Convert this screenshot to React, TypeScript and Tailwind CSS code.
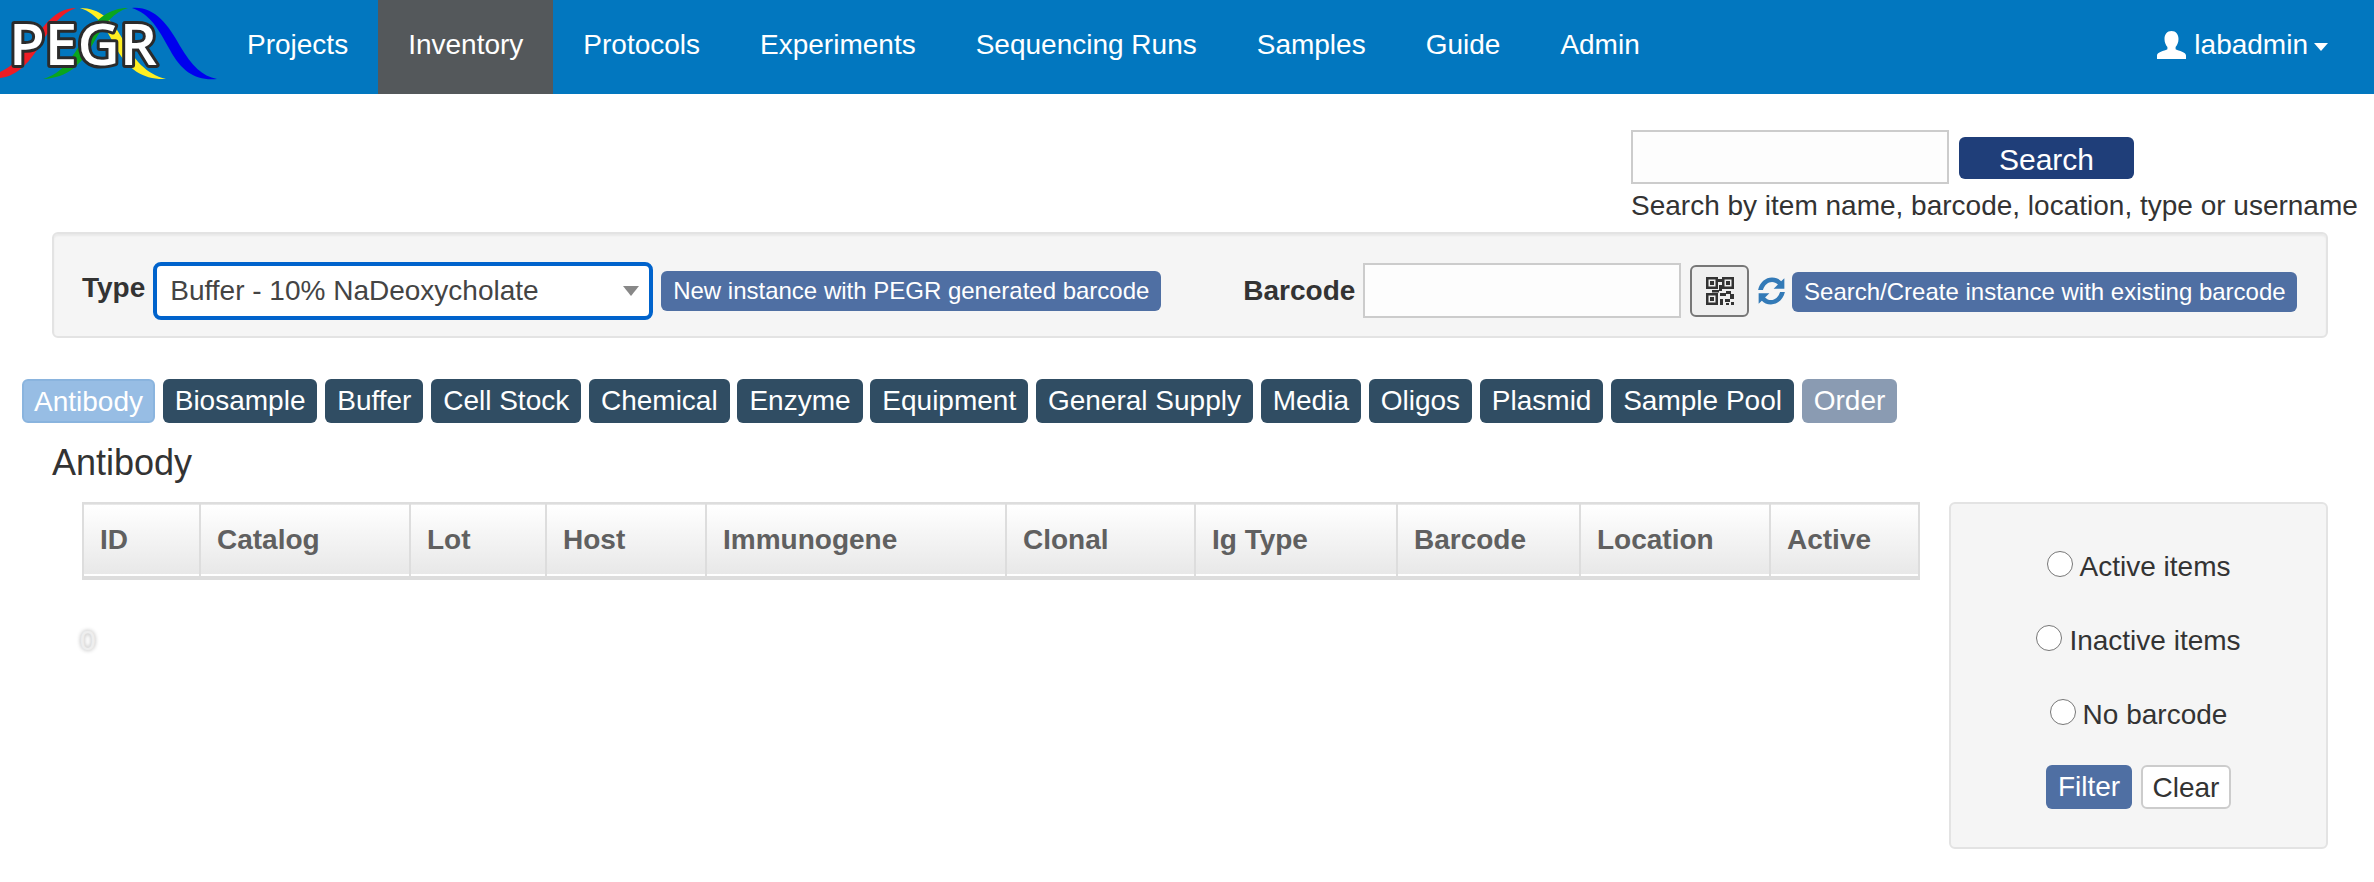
const NAV_ITEMS = ["Projects", "Inventory", "Protocols", "Experiments", "Sequencing Runs", "Samples", "Guide", "Admin"];
const TABS = ["Biosample", "Buffer", "Cell Stock", "Chemical", "Enzyme", "Equipment", "General Supply", "Media", "Oligos", "Plasmid", "Sample Pool"];
const COLUMNS = [
  { name: "ID", width: "w-[117px]" },
  { name: "Catalog", width: "w-[210px]" },
  { name: "Lot", width: "w-[136px]" },
  { name: "Host", width: "w-[160px]" },
  { name: "Immunogene", width: "w-[300px]" },
  { name: "Clonal", width: "w-[189px]" },
  { name: "Ig Type", width: "w-[202px]" },
  { name: "Barcode", width: "w-[183px]" },
  { name: "Location", width: "w-[190px]" },
  { name: "Active", width: "w-[149px]" },
];
const FILTERS = ["Active items", "Inactive items", "No barcode"];

function Logo() {
  return (
    <svg width="217" height="94" viewBox="0 0 217 94" className="shrink-0">
      <path d="M0 72 C22 62 32 40 44 26 C54 14 64 8 76 8 C60 14 52 26 42 42 C30 62 18 76 0 78 Z" fill="#ee1c25" />
      <path d="M80 8 C100 8 112 20 122 38 C134 60 146 74 166 79 C144 80 128 70 116 48 C106 28 98 14 80 8 Z" fill="#ffee22" />
      <path d="M43 79 C62 74 72 58 84 38 C96 18 110 8 128 8 C114 12 104 24 94 42 C82 64 68 78 43 79 Z" fill="#0aa51e" />
      <path d="M132 8 C154 6 168 24 180 46 C192 66 202 76 217 79 C196 81 182 72 170 50 C158 28 150 14 132 8 Z" fill="#0000ee" />
      <text
        x="9"
        y="65"
        fontFamily="'Open Sans', sans-serif"
        fontSize="58"
        fontWeight="600"
        textLength="148"
        lengthAdjust="spacingAndGlyphs"
        fill="#ffffff"
        stroke="#2b2b2b"
        strokeWidth="6"
        strokeLinejoin="round"
        paintOrder="stroke"
      >
        PEGR
      </text>
    </svg>
  );
}

function UserIcon() {
  return (
    <svg width="29" height="28" viewBox="0 0 29 28" fill="#ffffff">
      <path d="M14.5 0 C19 0 21.5 3.5 21.5 8 C21.5 11.5 20.2 14 18.6 16 L18.6 18.2 C22 20 29 21 29 24.5 L29 28 L0 28 L0 24.5 C0 21 7 20 10.4 18.2 L10.4 16 C8.8 14 7.5 11.5 7.5 8 C7.5 3.5 10 0 14.5 0 Z" />
    </svg>
  );
}

function QrIcon() {
  return (
    <svg width="28" height="28" viewBox="0 0 28 28" fill="#333333">
      <path fillRule="evenodd" d="M0 0H12V12H0Z M2.5 2.5V9.5H9.5V2.5Z" />
      <rect x="4" y="4" width="4" height="4" />
      <path fillRule="evenodd" d="M16 0H28V12H16Z M18.5 2.5V9.5H25.5V2.5Z" />
      <rect x="20" y="4" width="4" height="4" />
      <path fillRule="evenodd" d="M0 16H12V28H0Z M2.5 18.5V25.5H9.5V18.5Z" />
      <rect x="4" y="20" width="4" height="4" />
      <rect x="12" y="2" width="4" height="3" />
      <rect x="13" y="8" width="3" height="6" />
      <rect x="6" y="13" width="7" height="2.5" />
      <rect x="14" y="16" width="6" height="3" />
      <rect x="20" y="14" width="5" height="3" />
      <rect x="24" y="17" width="4" height="5" />
      <rect x="14" y="22" width="3" height="6" />
      <rect x="19" y="22" width="5" height="3" />
      <rect x="20" y="26" width="3" height="2" />
      <rect x="25" y="25" width="3" height="3" />
    </svg>
  );
}

function RefreshIcon() {
  const arm = "M1 13 C2.5 6 8 1.5 14 1.5 C18 1.5 20.5 3 22.5 5 L25.5 2 L25.5 12 L15.5 12 L19.5 8 C18 6.5 16 5.5 14 5.5 C10 5.5 7 8.5 5.5 13 Z";
  return (
    <svg width="29" height="30" viewBox="0 0 27 28" fill="#337ab7" className="ml-[8px] shrink-0">
      <path d={arm} />
      <path d={arm} transform="rotate(180 13.5 14)" />
    </svg>
  );
}

function Navbar() {
  return (
    <nav className="flex h-[94px] items-stretch bg-[#0277bf] text-[28px] text-white">
      <Logo />
      {NAV_ITEMS.map((item) => (
        <a key={item} className={`flex items-center px-[30px] pb-[4px] ${item === "Inventory" ? "bg-[#54585b]" : ""}`}>
          {item}
        </a>
      ))}
      <div className="ml-auto flex items-center pb-[4px] pr-[46px]">
        <UserIcon />
        <span className="ml-[8px]">labadmin</span>
        <span className="ml-[6px] mt-[4px] h-0 w-0 border-x-[7px] border-t-[8px] border-x-transparent border-t-white" />
      </div>
    </nav>
  );
}

function SearchBlock() {
  return (
    <div className="flex justify-end pr-[16px] pt-[36px]">
      <div className="w-[727px]">
        <div className="flex items-center gap-[10px]">
          <input className="h-[54px] w-[318px] border-2 border-[#cccccc] bg-[#fdfdfd]" />
          <button className="mt-[2px] h-[42px] w-[175px] rounded-[6px] bg-[#1f3e79] text-[30px] text-white">Search</button>
        </div>
        <p className="mt-[2px] whitespace-nowrap text-[28px] leading-[40px] text-[#333333]">
          Search by item name, barcode, location, type or username
        </p>
      </div>
    </div>
  );
}

function TypeBar() {
  return (
    <div className="mr-[46px] ml-[52px] mt-[6px] flex h-[106px] items-center rounded-[6px] border-2 border-[#e3e3e3] bg-[#f5f5f5] pl-[28px] pt-[12px] text-[#333333] shadow-[inset_0_2px_2px_rgba(0,0,0,0.05)]">
      <label className="mb-[6px] text-[28px] font-bold">Type</label>
      <div className="relative ml-[8px]">
        <select
          defaultValue="buffer"
          className="block h-[58px] w-[500px] appearance-none rounded-[8px] border-4 border-[#0063cc] bg-white pl-[13px] text-[28px] text-[#444444]"
        >
          <option value="buffer">Buffer - 10% NaDeoxycholate</option>
        </select>
        <span className="pointer-events-none absolute left-[470px] top-[24px] h-0 w-0 border-x-[8px] border-t-[10px] border-x-transparent border-t-[#888888]" />
      </div>
      <button className="mb-[1px] ml-[8px] h-[40px] w-[500px] rounded-[6px] bg-[#4f6fa3] text-[24px] text-white">
        New instance with PEGR generated barcode
      </button>
      <label className="ml-[82px] text-[28px] font-bold">Barcode</label>
      <input className="mb-[2px] ml-[8px] h-[55px] w-[318px] border-2 border-[#cccccc] bg-[#fdfdfd]" />
      <button className="mb-[1px] ml-[9px] flex h-[52px] w-[59px] items-center justify-center rounded-[6px] border-2 border-[#777777] bg-[#efefef]">
        <QrIcon />
      </button>
      <RefreshIcon />
      <button className="mt-[2px] ml-[6px] h-[40px] w-[505px] rounded-[6px] bg-[#4f6fa3] text-[24px] text-white">
        Search/Create instance with existing barcode
      </button>
    </div>
  );
}

function Tabs() {
  return (
    <div className="mt-[41px] flex gap-[7.75px] pl-[22px] text-[28px] text-white">
      <button className="h-[44px] rounded-[6px] border-2 border-[#8ab4de] bg-[#97bde4] px-[10px]">Antibody</button>
      {TABS.map((tab) => (
        <button key={tab} className="h-[44px] rounded-[6px] bg-[#304d63] px-[12px]">
          {tab}
        </button>
      ))}
      <button className="h-[44px] rounded-[6px] bg-[#8a9bb2] px-[12px]">Order</button>
    </div>
  );
}

function InventoryTable() {
  return (
    <div className="w-[1837px]">
      <table className="w-[1836px] table-fixed border-collapse">
        <thead>
          <tr className="h-[75px] border-x-2 border-t-2 border-b-4 border-[#dddddd] bg-gradient-to-b from-white to-[#e8e8e8]">
            {COLUMNS.map((col) => (
              <th
                key={col.name}
                className={`${col.width} border-l-2 border-[#dddddd] pl-[16px] text-left text-[28px] font-bold text-[#606060] first:border-l-0`}
              >
                {col.name}
              </th>
            ))}
          </tr>
        </thead>
      </table>
      <div className="-ml-[2px] mt-[46px] text-[28px] leading-[30px] text-[#eeeeee] [text-shadow:0_0_2px_#eeeeee,0_0_4px_#999999]">0</div>
    </div>
  );
}

function FilterPanel() {
  return (
    <div className="flex h-[347px] w-[379px] flex-col items-center rounded-[6px] border-2 border-[#e3e3e3] bg-[#f5f5f5] pt-[43px] text-[28px] text-[#333333]">
      {FILTERS.map((label) => (
        <label key={label} className="mb-[34px] flex h-[40px] items-center gap-[7px]">
          <input type="radio" name="filter" className="mb-[6px] h-[26px] w-[26px]" />
          {label}
        </label>
      ))}
      <div className="-mt-[4px] flex gap-[9px]">
        <button className="h-[44px] w-[86px] rounded-[6px] bg-[#4f6fa3] text-white">Filter</button>
        <button className="h-[44px] w-[90px] rounded-[6px] border-2 border-[#cccccc] bg-white">Clear</button>
      </div>
    </div>
  );
}

export default function App() {
  return (
    <div className="min-h-[882px] bg-white font-['Liberation_Sans',Arial,sans-serif]">
      <Navbar />
      <SearchBlock />
      <TypeBar />
      <Tabs />
      <h3 className="mt-[20px] pl-[52px] text-[36px] leading-[40px] text-[#333333]">Antibody</h3>
      <div className="mt-[19px] flex gap-[30px] pl-[82px]">
        <InventoryTable />
        <FilterPanel />
      </div>
    </div>
  );
}
